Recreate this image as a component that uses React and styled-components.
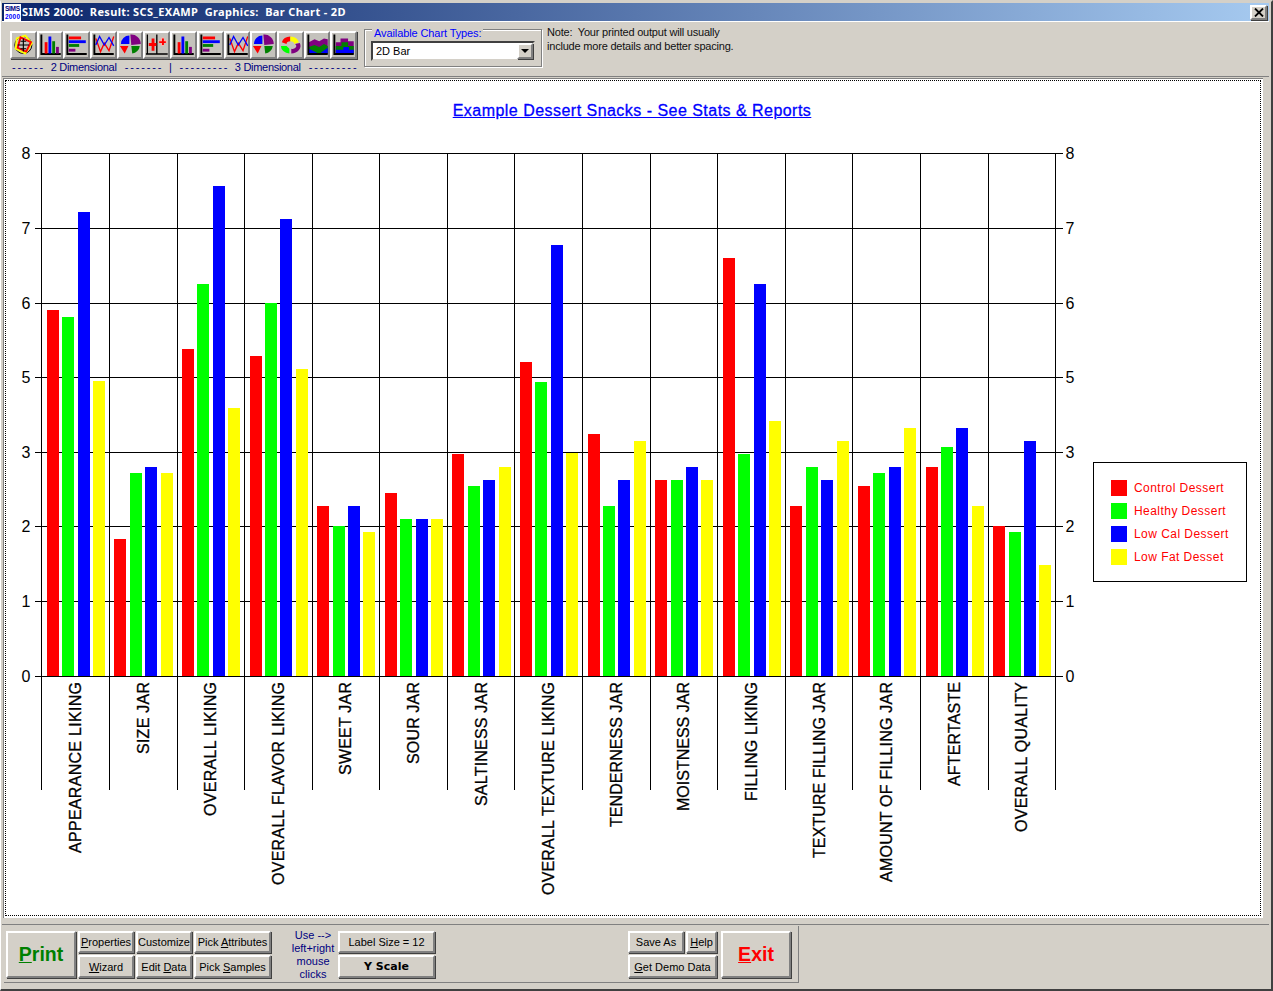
import React from "react";
import styled, { createGlobalStyle, css } from "styled-components";

const GlobalStyle = createGlobalStyle`
  html, body {
    margin: 0;
    padding: 0;
    background: #d4d0c8;
    overflow: hidden;
  }
  * { box-sizing: border-box; }
`;

const uiFont = `"Liberation Sans", Arial, sans-serif`;

const raised = css`
  background: #d4d0c8;
  border: 2px solid;
  border-color: #ffffff #808080 #808080 #ffffff;
  box-shadow: 1px 1px 0 #404040;
`;

const Window = styled.div`
  width: 1273px;
  height: 991px;
  display: flex;
  flex-direction: column;
  background: #d4d0c8;
  border-top: 2px solid #d4d0c8;
  border-left: 1px solid #ffffff;
  border-right: 2px solid #404040;
  border-bottom: 2px solid #404040;
  padding: 1px 2px 0 1px;
  font-family: ${uiFont};
  font-size: 11px;
  color: #000;
`;

const TitleBar = styled.div`
  height: 19px;
  flex: none;
  display: flex;
  align-items: center;
  justify-content: space-between;
  padding: 0 1px 0 2px;
  background: linear-gradient(90deg, #0a246a 0%, #a6caf0 100%);
  border-bottom: 1px solid #fff;
`;

const TitleLeft = styled.div`
  display: flex;
  align-items: center;
  gap: 1px;
`;

const TitleText = styled.span`
  padding-bottom: 2px;
  color: #fff;
  font-family: "Noto Sans", "Liberation Sans", sans-serif;
  font-weight: 700;
  font-size: 11px;
  letter-spacing: 0.35px;
  white-space: pre;
`;

const CloseButton = styled.button`
  ${raised}
  width: 17px;
  height: 15px;
  padding: 0;
  margin-right: 1px;
  display: flex;
  align-items: center;
  justify-content: center;
`;

const Toolbar = styled.div`
  height: 55px;
  flex: none;
  display: flex;
  padding: 3px 0 0 8px;
  border-bottom: 1px solid #808080;
`;

const ChartTools = styled.div`
  width: 348px;
  margin-top: 6px;
  display: flex;
  flex-direction: column;
`;

const IconRow = styled.div`
  display: flex;
  height: 28px;
`;

const IconButton = styled.button`
  ${raised}
  width: 26.7px;
  height: 28px;
  padding: 0;
  display: flex;
  align-items: center;
  justify-content: center;
  background: #c4c2bc;
`;

const DimensionRow = styled.div`
  display: flex;
  justify-content: space-between;
  margin-top: 2px;
  padding: 0 2px;
  color: #000080;
  font-size: 11px;
  line-height: 13px;
  letter-spacing: -0.3px;
  white-space: pre;
`;

const Dashes = styled.span`
  letter-spacing: -0.6px;
`;

const GroupBox = styled.div`
  width: 178px;
  height: 38px;
  margin: 4px 0 0 6px;
  padding: 0 6px;
  border: 1px solid #808080;
  box-shadow: 1px 1px 0 #fff, inset 1px 1px 0 #fff;
`;

const GroupLabel = styled.div`
  width: fit-content;
  margin: -3px 0 0 1px;
  padding: 0 2px;
  background: #d4d0c8;
  color: #0000ff;
  font-size: 11px;
  line-height: 13px;
  letter-spacing: -0.1px;
`;

const Combo = styled.div`
  height: 20px;
  margin-top: 1px;
  display: flex;
  align-items: center;
  justify-content: space-between;
  background: #fff;
  border: 2px solid;
  border-color: #404040 #d4d0c8 #d4d0c8 #404040;
  padding-left: 3px;
  font-size: 11px;
`;

const ComboArrow = styled.span`
  ${raised}
  width: 16px;
  height: 16px;
  display: flex;
  align-items: center;
  justify-content: center;
  &::after {
    content: "";
    border-left: 4px solid transparent;
    border-right: 4px solid transparent;
    border-top: 4px solid #000;
  }
`;

const Note = styled.div`
  margin: 0 0 0 5px;
  font-size: 11px;
  line-height: 14px;
  letter-spacing: -0.2px;
  color: #111;
  white-space: pre;
`;

const ChartFrame = styled.main`
  height: 840px;
  flex: none;
  margin: 1px 6px 0 1px;
  padding: 1px 2px 2px 1px;
  background: #fff;
  border-top: 1px solid #808080;
  border-left: 1px solid #808080;
`;

const ChartInner = styled.div`
  height: 100%;
  display: flex;
  flex-direction: column;
  border: 1px dotted #000;
`;

const ChartTitle = styled.a`
  align-self: center;
  margin: 20px 0 0 -2px;
  color: #0000ff;
  font-size: 16px;
  line-height: 20px;
  letter-spacing: 0.47px;
  -webkit-text-stroke: 0.3px #0000ff;
  text-decoration: underline;
`;

const ChartRow = styled.div`
  display: flex;
  align-items: flex-start;
  margin-top: 19px;
`;

const Legend = styled.ul`
  list-style: none;
  width: 154px;
  height: 120px;
  margin: 322px 0 0 7px;
  padding: 13px 0 0 17px;
  border: 1px solid #000;
  display: flex;
  flex-direction: column;
`;

const LegendItem = styled.li`
  height: 23px;
  display: flex;
  align-items: center;
  gap: 7px;
  color: #ff0000;
  font-size: 12px;
  letter-spacing: 0.45px;
`;

const Swatch = styled.span`
  width: 16px;
  height: 16px;
  background: ${(p) => p.$color};
`;

const BottomArea = styled.div`
  flex: 1;
  margin-top: 6px;
  border-top: 1px solid #808080;
`;

const BottomBar = styled.footer`
  width: 795px;
  height: 57px;
  margin: 1px 0 0 2px;
  padding: 5px 0 0 2px;
  display: flex;
  border: 1px solid #808080;
  border-top: 0;
  border-left: 0;
`;

const Button = styled.button`
  ${raised}
  padding: 0;
  font-family: ${uiFont};
  font-size: 11px;
  color: #000;
  white-space: nowrap;
  ${(p) => p.$wide && "grid-column: span 2;"}
`;

const BigButton = styled(Button)`
  width: 70px;
  height: 47px;
  margin-left: ${(p) => p.$offset || 0}px;
  font-size: 19.5px;
  font-weight: 700;
  color: ${(p) => p.$color};
`;

const ButtonGrid = styled.div`
  display: grid;
  grid-template-columns: ${(p) => p.$columns};
  grid-template-rows: 22px 23px;
  gap: 2px;
  margin-left: ${(p) => p.$offset}px;
`;

const BoldButton = styled(Button)`
  font-family: "DejaVu Sans", sans-serif;
  font-weight: 700;
`;

const MouseHint = styled.div`
  width: 48px;
  margin: -2px 0 0 18px;
  color: #000080;
  font-size: 11px;
  line-height: 13px;
  text-align: center;
`;

const RED = "#ff0000";
const GREEN = "#00ff00";
const BLUE = "#0000ff";
const YELLOW = "#ffff00";
const SERIES = [RED, GREEN, BLUE, YELLOW];

// top pixel of each bar, read off the picture
const groups = [
  { name: "APPEARANCE LIKING", len: 171, tops: [310, 317, 212, 381] },
  { name: "SIZE JAR", len: 72, tops: [539, 473, 467, 473] },
  { name: "OVERALL LIKING", len: 134, tops: [349, 284, 186, 408] },
  { name: "OVERALL FLAVOR LIKING", len: 203, tops: [356, 303, 219, 369] },
  { name: "SWEET JAR", len: 93, tops: [506, 526, 506, 532] },
  { name: "SOUR JAR", len: 82, tops: [493, 519, 519, 519] },
  { name: "SALTINESS JAR", len: 124, tops: [454, 486, 480, 467] },
  { name: "OVERALL TEXTURE LIKING", len: 213, tops: [362, 382, 245, 453] },
  { name: "TENDERNESS JAR", len: 145, tops: [434, 506, 480, 441] },
  { name: "MOISTNESS JAR", len: 129, tops: [480, 480, 467, 480] },
  { name: "FILLING LIKING", len: 119, tops: [258, 454, 284, 421] },
  { name: "TEXTURE FILLING JAR", len: 176, tops: [506, 467, 480, 441] },
  { name: "AMOUNT OF FILLING JAR", len: 200, tops: [486, 473, 467, 428] },
  { name: "AFTERTASTE", len: 104, tops: [467, 447, 428, 506] },
  { name: "OVERALL QUALITY", len: 150, tops: [526, 532, 441, 565] },
];

const legend = [
  { label: "Control Dessert", color: RED },
  { label: "Healthy Dessert", color: GREEN },
  { label: "Low Cal Dessert", color: BLUE },
  { label: "Low Fat Desset", color: YELLOW },
];

const PLOT_LEFT = 41;
const GROUP_W = 67.6;
const BASE = 676;
// the original axis really skips 4
const yTicks = [
  [8, 153],
  [7, 228],
  [6, 303],
  [5, 377],
  [3, 452],
  [2, 526],
  [1, 601],
  [0, 676],
];

function BarChart() {
  return (
    <svg width="1080" height="760" viewBox="6 140 1080 760" style={{ display: "block", flex: "none" }}>
      {yTicks.map(([v, y]) => (
        <g key={v}>
          <line x1="35" x2="1063" y1={y + 0.5} y2={y + 0.5} stroke="#000" />
          <text x="26" y={y + 6} fontFamily="Liberation Sans" fontSize="16" textAnchor="middle">{v}</text>
          <text x="1070" y={y + 6} fontFamily="Liberation Sans" fontSize="16" textAnchor="middle">{v}</text>
        </g>
      ))}
      {groups.concat({ tick: true }).map((g, i) => {
        const x = Math.round(PLOT_LEFT + 0.3 + i * GROUP_W) + 0.5;
        return <line key={i} x1={x} x2={x} y1="153" y2="790" stroke="#000" />;
      })}
      {groups.map((g, i) => {
        const left = PLOT_LEFT + i * GROUP_W;
        return (
          <g key={g.name}>
            {g.tops.map((top, s) => (
              <rect
                key={s}
                x={Math.round(left + 5.8 + s * 15.4)}
                y={top}
                width="12"
                height={BASE - top}
                fill={SERIES[s]}
              />
            ))}
            <text
              transform={`translate(${left + 40} 682) rotate(-90)`}
              fontFamily="Liberation Sans"
              fontSize="16"
              textAnchor="end"
              textLength={g.len}
              lengthAdjust="spacing"
              stroke="#000"
              strokeWidth="0.3"
            >
              {g.name}
            </text>
          </g>
        );
      })}
    </svg>
  );
}

const K = "#000";
const R = "#ff0000";
const G = "#008000";
const B = "#0000ff";
const P = "#800080";
const Axes = () => <path d="M2.5 1v20.5H23" fill="none" stroke={K} strokeWidth="2" />;

const iconShapes = {
  target: (
    <>
      <circle cx="12" cy="12" r="9" fill="none" stroke={K} strokeWidth="1" />
      <path d="M5 5l9-3 7 8-7 11-10-5z" fill="none" stroke="#ffff00" strokeWidth="2" />
      <path d="M9 4l11 5-5 10-9-4z" fill="none" stroke={R} strokeWidth="2" />
      <path d="M12 5v14M6 12h12M9 8h6M9 16h6" stroke={K} strokeWidth="1.2" />
    </>
  ),
  bar: (
    <>
      <Axes />
      <rect x="6" y="9" width="3" height="12" fill={R} />
      <rect x="10" y="3" width="3" height="18" fill={B} />
      <rect x="14" y="8" width="3" height="13" fill={G} />
      <rect x="18" y="14" width="3" height="7" fill={P} />
    </>
  ),
  hbar: (
    <>
      <Axes />
      <rect x="4" y="3" width="13" height="3" fill={R} />
      <rect x="4" y="7" width="18" height="3" fill={B} />
      <rect x="4" y="11" width="11" height="3" fill={G} />
      <rect x="4" y="16" width="7" height="3" fill={P} />
    </>
  ),
  line: (
    <>
      <Axes />
      <path d="M4 5l5 14 4-9 5 8 5-15" fill="none" stroke={R} strokeWidth="1.4" />
      <path d="M4 12l4-9 5 9 5-8 5 9" fill="none" stroke={B} strokeWidth="1.4" />
    </>
  ),
  pie: (
    <>
      <path d="M12 1a10 10 0 0 1 11 10l-10 1z" fill={P} />
      <path d="M11 2a9 9 0 0 0-9 9h9z" fill={B} />
      <path d="M13 13h9a9 9 0 0 1-8 8z" fill={G} />
      <path d="M1 13h9l-4 8z" fill={R} />
    </>
  ),
  plus: (
    <>
      <path d="M2.5 1v21M12.5 1v21M1 21.5h23" stroke={K} strokeWidth="1.4" />
      <path d="M7 5h3v5h2v3h-2v5H7v-5H4v-3h3z" fill={R} />
      <path d="M17 4h3v3h3v3h-3v3h-3v-3h-3V7h3z" fill="#ffb0a8" />
      <path d="M18 5h2v3h2v2h-2v2h-2v-2h-3V8h3z" fill={R} />
    </>
  ),
  ring: (
    <>
      <path d="M3 9a10 8 0 0 1 9-6v5a4 3 0 0 0-4 3z" fill={R} />
      <path d="M12 3a10 8 0 0 1 9 6l-5 2a4 3 0 0 0-4-3z" fill="#ffff00" />
      <path d="M22 10a10 8 0 0 1-9 11v-5a4 3 0 0 0 4-5z" fill={P} />
      <path d="M2 13h6l3 3v5a10 8 0 0 1-9-8z" fill="#00ff00" />
    </>
  ),
  area: (
    <>
      <path d="M3 9l6-3 5 2 5-3 4 1v15H3z" fill={P} />
      <path d="M3 14l6-2 5 2 5-3 4 2v8H3z" fill={G} />
      <path d="M3 16l6 3 4 2H3zM16 20l7-5v6h-7z" fill={B} />
      <Axes />
    </>
  ),
  stack: (
    <>
      <path d="M4 9h5V5h8v3h6v13H4z" fill={P} />
      <path d="M4 13h6V9h7v4h6v8H4z" fill={G} />
      <path d="M4 17h8v-3h6v3h5v4H4z" fill={B} />
      <Axes />
    </>
  ),
};

const toolIcons = ["target", "bar", "hbar", "line", "pie", "plus", "bar", "hbar", "line", "pie", "ring", "area", "stack"];

function AppLogo() {
  return (
    <svg width="17" height="17" viewBox="0 0 17 17" style={{ display: "block" }}>
      <rect width="17" height="17" fill="#fff" />
      <text x="8.5" y="7" textAnchor="middle" fontFamily="Liberation Sans" fontSize="6.5" fontWeight="700" fill="#000080" textLength="15">SIMS</text>
      <text x="8.5" y="15" textAnchor="middle" fontFamily="Liberation Sans" fontSize="6.5" fontWeight="700" fill="#0000ff" textLength="15">2000</text>
    </svg>
  );
}

export default function App() {
  return (
    <>
      <GlobalStyle />
      <Window>
        <TitleBar>
          <TitleLeft>
            <AppLogo />
            <TitleText>SIMS 2000:  Result: SCS_EXAMP  Graphics:  Bar Chart - 2D</TitleText>
          </TitleLeft>
          <CloseButton aria-label="Close">
            <svg width="10" height="9" viewBox="0 0 10 9">
              <path d="M1 0.5l8 8M9 0.5l-8 8" stroke="#000" strokeWidth="1.8" />
            </svg>
          </CloseButton>
        </TitleBar>

        <Toolbar>
          <ChartTools>
            <IconRow>
              {toolIcons.map((name, i) => (
                <IconButton key={i}>
                  <svg width="24" height="24" viewBox="0 0 24 24">{iconShapes[name]}</svg>
                </IconButton>
              ))}
            </IconRow>
            <DimensionRow>
              <Dashes>- - - - - -</Dashes>
              <span>2 Dimensional</span>
              <Dashes>- - - - - - -</Dashes>
              <span>|</span>
              <Dashes>- - - - - - - - -</Dashes>
              <span>3 Dimensional</span>
              <Dashes>- - - - - - - - -</Dashes>
            </DimensionRow>
          </ChartTools>
          <GroupBox>
            <GroupLabel>Available Chart Types:</GroupLabel>
            <Combo>
              2D Bar
              <ComboArrow />
            </Combo>
          </GroupBox>
          <Note>{"Note:  Your printed output will usually\ninclude more details and better spacing."}</Note>
        </Toolbar>

        <ChartFrame>
          <ChartInner>
            <ChartTitle href="#">Example Dessert Snacks - See Stats &amp; Reports</ChartTitle>
            <ChartRow>
              <BarChart />
              <Legend>
                {legend.map((item) => (
                  <LegendItem key={item.label}>
                    <Swatch $color={item.color} />
                    {item.label}
                  </LegendItem>
                ))}
              </Legend>
            </ChartRow>
          </ChartInner>
        </ChartFrame>

        <BottomArea>
          <BottomBar>
            <BigButton $color="#008000"><u>P</u>rint</BigButton>
            <ButtonGrid $columns="56px 56px 77px" $offset={2}>
              <Button><u>P</u>roperties</Button>
              <Button>Customize</Button>
              <Button>Pick <u>A</u>ttributes</Button>
              <Button><u>W</u>izard</Button>
              <Button>Edit <u>D</u>ata</Button>
              <Button>Pick <u>S</u>amples</Button>
            </ButtonGrid>
            <MouseHint>Use --&gt;<br />left+right<br />mouse<br />clicks</MouseHint>
            <ButtonGrid $columns="97px" $offset={1}>
              <Button>Label Size = 12</Button>
              <BoldButton>Y Scale</BoldButton>
            </ButtonGrid>
            <ButtonGrid $columns="56px 31px" $offset={193}>
              <Button>Save As</Button>
              <Button><u>H</u>elp</Button>
              <Button $wide><u>G</u>et Demo Data</Button>
            </ButtonGrid>
            <BigButton $color="#ff0000" $offset={4}><u>E</u>xit</BigButton>
          </BottomBar>
        </BottomArea>
      </Window>
    </>
  );
}
